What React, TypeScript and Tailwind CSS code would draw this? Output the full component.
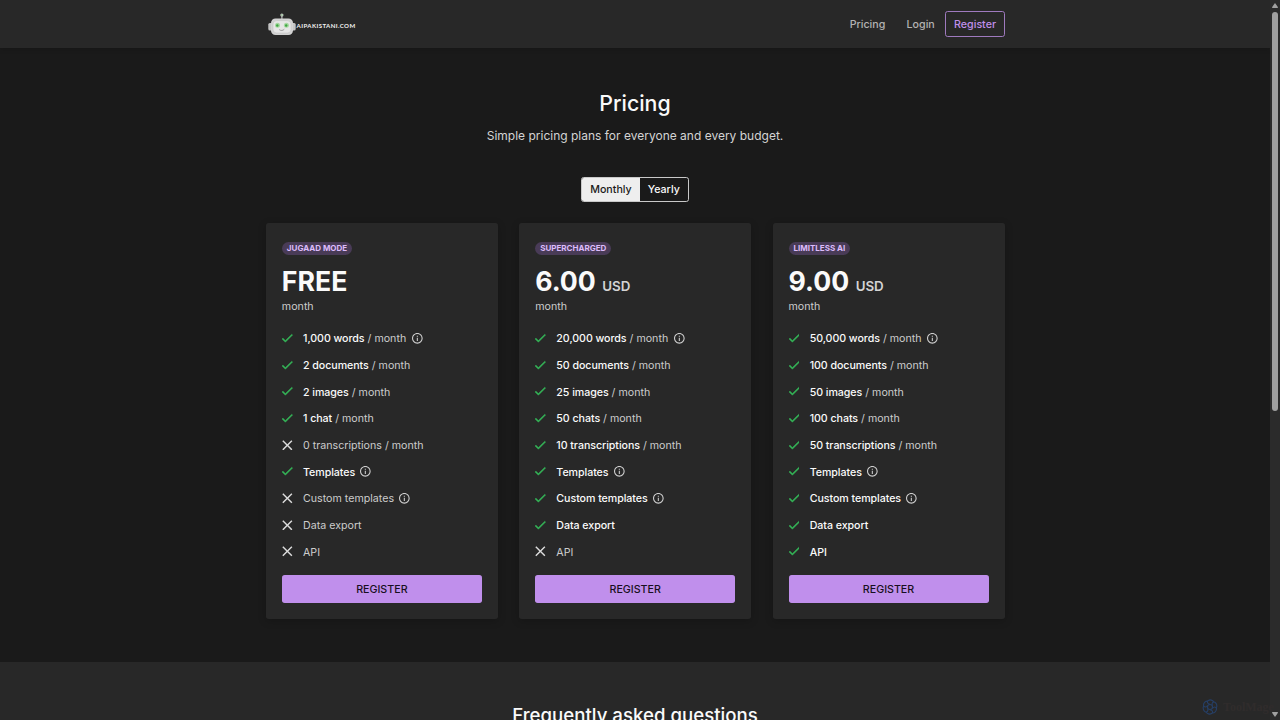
import React, { useState } from 'react';

interface Feature {
  amount: string;
  period?: boolean;
  info?: boolean;
  enabled: boolean;
}

interface Plan {
  name: string;
  price: string;
  currency?: string;
  features: Feature[];
}

const buildFeatures = (counts: string[], extras: boolean[]): Feature[] => [
  { amount: `${counts[0]} words`, period: true, info: true, enabled: true },
  { amount: `${counts[1]} documents`, period: true, enabled: true },
  { amount: `${counts[2]} images`, period: true, enabled: true },
  { amount: `${counts[3]}`, period: true, enabled: true },
  { amount: `${counts[4]} transcriptions`, period: true, enabled: counts[4] !== '0' },
  { amount: 'Templates', info: true, enabled: true },
  { amount: 'Custom templates', info: true, enabled: extras[0] },
  { amount: 'Data export', enabled: extras[1] },
  { amount: 'API', enabled: extras[2] },
];

const plans: Plan[] = [
  {
    name: 'JUGAAD MODE',
    price: 'FREE',
    features: buildFeatures(['1,000', '2', '2', '1 chat', '0'], [false, false, false]),
  },
  {
    name: 'SUPERCHARGED',
    price: '6.00',
    currency: 'USD',
    features: buildFeatures(['20,000', '50', '25', '50 chats', '10'], [true, true, false]),
  },
  {
    name: 'LIMITLESS AI',
    price: '9.00',
    currency: 'USD',
    features: buildFeatures(['50,000', '100', '50', '100 chats', '50'], [true, true, true]),
  },
];

const CheckIcon = () => (
  <svg viewBox="3.41 3.7 17.6 17.6" className="h-[10.67px] w-[10.67px] shrink-0 fill-[#35b558] stroke-[#35b558]" strokeWidth="0.7">
    <path d="M9 16.17 4.83 12l-1.42 1.41L9 19 21 7l-1.41-1.41z" />
  </svg>
);

const CloseIcon = () => (
  <svg viewBox="4.6 4.6 14.8 14.8" className="h-[10.67px] w-[10.67px] shrink-0 fill-[#dcdcdc]">
    <path d="M19 6.41 17.59 5 12 10.59 6.41 5 5 6.41 10.59 12 5 17.59 6.41 19 12 13.41 17.59 19 19 17.59 13.41 12z" />
  </svg>
);

const InfoIcon = () => (
  <svg viewBox="2 2 20 20" className="ml-[5.3px] h-[10.67px] w-[10.67px] shrink-0 overflow-visible fill-[#cfcfcf]">
    <path d="M11 7h2v2h-2zm0 4h2v6h-2zm1-9C6.48 2 2 6.48 2 12s4.48 10 10 10 10-4.48 10-10S17.52 2 12 2m0 18c-4.41 0-8-3.59-8-8s3.59-8 8-8 8 3.59 8 8-3.59 8-8 8" />
  </svg>
);

const Logo = () => (
  <div className="flex items-center">
    <svg viewBox="0 0 28 23" className="h-[23px] w-[28px]">
      <rect x="13.3" y="2" width="1.2" height="5" fill="#b9b9b9" />
      <circle cx="13.9" cy="2" r="1.6" fill="#cfd3cf" />
      <circle cx="13.9" cy="2" r="0.7" fill="#6fae6a" />
      <rect x="0.3" y="10" width="5" height="7.5" rx="1.6" fill="#c4c4c4" />
      <rect x="22.7" y="10" width="5" height="7.5" rx="1.6" fill="#c4c4c4" />
      <rect x="3" y="5.5" width="22" height="16.6" rx="4.5" fill="#d2d2d2" />
      <rect x="5" y="7.6" width="18" height="12.4" rx="3.5" fill="#e6e6e6" stroke="#bcbcbc" strokeWidth="0.5" />
      <circle cx="9.5" cy="12.3" r="2.5" fill="#a6d8a0" />
      <circle cx="9.3" cy="12.5" r="1.2" fill="#3ea544" />
      <circle cx="18.4" cy="12.3" r="2.5" fill="#a6d8a0" />
      <circle cx="18.2" cy="12.5" r="1.2" fill="#3ea544" />
      <path d="M11.3 16.6c1.6 1.3 3.6 1.1 5-.4" fill="none" stroke="#888" strokeWidth="0.8" />
    </svg>
    <span className="ml-[0.5px] pt-[3px] font-['Lato'] text-[6.1px] font-bold leading-2 tracking-[0.4px] text-[#f2f2f2]">AIPAKISTANI.COM</span>
  </div>
);

const FeatureRow: React.FC<{ feature: Feature }> = ({ feature }) => (
  <li className="flex h-[26.67px] items-center">
    {feature.enabled ? <CheckIcon /> : <CloseIcon />}
    <span className="ml-[10.5px] whitespace-pre pt-[2px] text-[10.67px] text-[#cccccc]">
      <span className={feature.enabled ? 'font-medium tracking-[-0.06px] text-[#fafafa]' : ''}>{feature.amount}</span>
      {feature.period && ' / month'}
    </span>
    {feature.info && <InfoIcon />}
  </li>
);

const PlanCard: React.FC<{ plan: Plan; period: string }> = ({ plan, period }) => (
  <div className="flex h-[396px] flex-col rounded-[2.67px] bg-[#282828] px-4 pt-[18.7px] pb-4 shadow-[0_2px_8px_rgba(0,0,0,0.2)]">
    <span className="flex h-[13.3px] items-center self-start rounded-full bg-[#493b57] px-[5px] pb-[1px] text-[8px] font-bold text-[#ddbcfb]">{plan.name}</span>
    <div className="mt-[10px] flex h-8 items-baseline font-bold leading-8 text-[#fafafa]">
      <span className="text-[26.67px]">{plan.price}</span>
      {plan.currency && <span className="ml-[6.5px] text-[13.33px] font-semibold text-[#d4d4d4]">{plan.currency}</span>}
    </div>
    <div className="mt-[2px] h-4 text-[10.67px] leading-4 text-[#cccccc]">{period}</div>
    <ul className="mt-[9.7px]">
      {plan.features.map((feature) => (
        <FeatureRow key={feature.amount} feature={feature} />
      ))}
    </ul>
    <button className="mt-auto h-7 w-full rounded-[2.67px] bg-[#c08fec] pt-[2px] text-[10.67px] font-medium text-[#180f20]">REGISTER</button>
  </div>
);

const ToolMageMark = () => (
  <div className="absolute top-[699px] left-[1202px] flex items-center">
    <svg viewBox="0 0 16 16" className="h-4 w-4" fill="none" stroke="#263f66" strokeWidth="1.1">
      {[0, 60, 120, 180, 240, 300].map((angle) => (
        <path key={angle} d="M8 5.2C5.5 4.8 4.5 3 6.3 1.4 8.3.4 11 1 12 3.2" transform={`rotate(${angle} 8 8)`} />
      ))}
      <circle cx="8" cy="8" r="2.5" />
    </svg>
    <span className="ml-[5px] font-['Liberation_Serif'] text-[12px] font-bold leading-4 text-[#302c2c]">ToolMage</span>
  </div>
);

const Scrollbar = () => (
  <div className="flex w-[10px] flex-col items-center bg-[#2b2b2b]">
    <svg viewBox="0 0 6 5" className="mt-[3px] h-[5px] w-[6px] fill-[#a0a0a0]">
      <path d="M3 0 6 4.2 5.6 5H.4L0 4.2z" />
    </svg>
    <div className="mt-1 h-[399px] w-[6px] rounded-full bg-[#9f9f9f]" />
    <svg viewBox="0 0 6 5" className="relative z-10 mt-auto mb-[3px] h-[5px] w-[6px] fill-[#a0a0a0]">
      <path d="M3 5 6 .8 5.6 0H.4L0 .8z" />
    </svg>
  </div>
);

const App: React.FC = () => {
  const [billing, setBilling] = useState<'month' | 'year'>('month');

  return (
    <div className="relative flex h-[720px] w-[1280px] overflow-hidden bg-[#1a1a1a] font-['Inter',sans-serif] text-[#fafafa]">
      <div className="flex w-[1270px] flex-col">
        <header className="h-12 shrink-0 bg-[#282828] shadow-[0_1px_5px_rgba(0,0,0,0.15)]">
          <div className="mx-auto flex h-12 w-[739.4px] items-center justify-between pl-[2.8px]">
            <Logo />
            <nav className="flex items-center text-[10.67px] font-medium text-[#b3b3b3]">
              <a href="#pricing" className="pt-[2px]">Pricing</a>
              <a href="#login" className="ml-[21.3px] pt-[2px]">Login</a>
              <a href="#register" className="ml-[10.67px] flex h-[26px] items-center rounded-[2.67px] border border-[#9f7abf] px-[7.67px] pt-[2px] text-[#c08fec]">Register</a>
            </nav>
          </div>
        </header>

        <main className="flex h-[613.5px] shrink-0 flex-col items-center pt-[42px]">
          <h1 className="h-[27px] text-[21.33px] font-medium leading-[27px]">Pricing</h1>
          <p className="mt-[10px] h-[18px] text-[12px] leading-[18px] text-[#d4d4d4]">Simple pricing plans for everyone and every budget.</p>
          <div className="mt-[31.7px] flex h-[25.3px] overflow-hidden rounded-[2.67px] border border-[#c9c9c9] text-[10.67px] font-medium">
            <button
              onClick={() => setBilling('month')}
              className={billing === 'month' ? 'bg-[#eeeeee] px-2 pt-[2px] text-[#1a1a1a]' : 'px-2 pt-[2px]'}
            >
              Monthly
            </button>
            <button
              onClick={() => setBilling('year')}
              className={billing === 'year' ? 'bg-[#eeeeee] px-2 pt-[2px] text-[#1a1a1a]' : 'px-2 pt-[2px]'}
            >
              Yearly
            </button>
          </div>
          <div className="mt-[21.3px] ml-[0.4px] grid w-[738.67px] grid-cols-3 gap-[21.33px]">
            {plans.map((plan) => (
              <PlanCard key={plan.name} plan={plan} period={billing} />
            ))}
          </div>
        </main>

        <section className="h-[120px] shrink-0 bg-[#282828] pt-[42.6px] text-center">
          <h2 className="text-[18.67px] font-medium leading-6">Frequently asked questions</h2>
        </section>
      </div>
      <Scrollbar />
      <ToolMageMark />
    </div>
  );
};

export default App;
